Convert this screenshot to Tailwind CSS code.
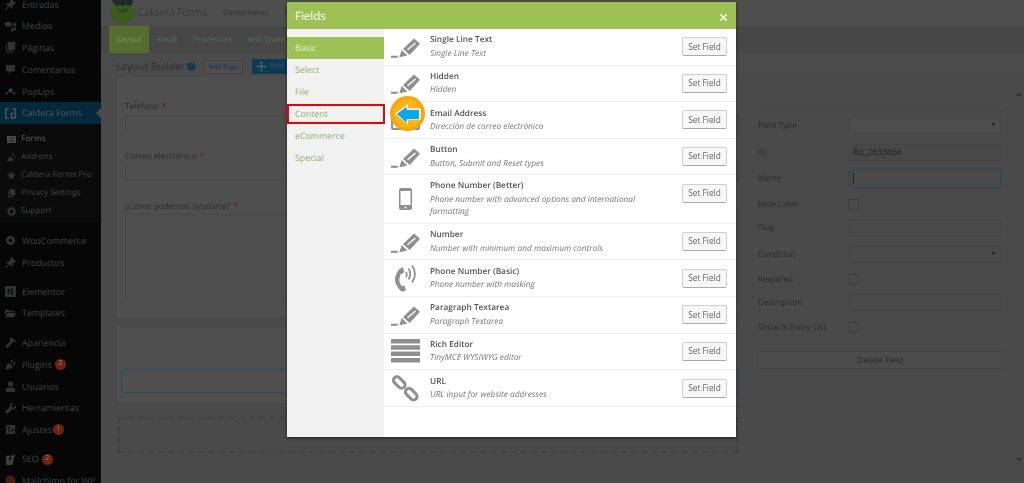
<!DOCTYPE html>
<html lang="es">
<head>
    <meta charset="UTF-8">
    <title>Caldera Forms - Fields</title>
    <script src="https://cdn.jsdelivr.net/npm/@tailwindcss/browser@4"></script>
</head>
<body class="bg-[#4a4a4a]">
    <svg class="hidden">
        <symbol id="pencil" viewBox="0 0 29 20">
            <rect x="0" y="17.700" width="6.700" height="2.100" fill="currentColor"/>
            <path d="M8.300 19.300l2.400-7.300 5.700 5.600z" fill="currentColor"/>
            <path d="M23 .5L29 5.800 18.700 17 12 11z" fill="currentColor"/>
            <path d="M16.500 11.800L24.500 5" stroke="#fff" stroke-width="1.400" fill="none"/>
        </symbol>
    </svg>

    <div class="relative w-[1024px] h-[483px] overflow-hidden flex font-['Open_Sans',sans-serif] [text-rendering:geometricPrecision] blur-[0.35px]">
        <!-- Sidebar -->
        <aside class="w-[101px] h-[483px] shrink-0 bg-[#060606] text-[8.900px] text-[#3f4345] overflow-hidden whitespace-nowrap">
            <div class="-mt-[6.500px]">
                <div class="h-[21.750px] flex items-center gap-[6px] pl-[5px]">
                    <svg class="w-[11px] h-[11px]" viewBox="0 0 12 12" fill="#303234"><path d="M7 0l5 5-1 1-1-.500-2 2 .5 2-1 1-2.500-2.500L1 12 0 11.500l3.500-3.500L1 5.500l1-1 2 .5 2-2L5.500 1z"/></svg>
                    <span>Entradas</span>
                </div>
                <div class="h-[21.750px] flex items-center gap-[6px] pl-[5px]">
                    <svg class="w-[11px] h-[11px]" viewBox="0 0 12 12" fill="#303234"><path d="M0 1h7v5H0zM8 3l4-1v7a1.500 1.500 0 1 1-1-1.400V4L9 4.500V10a1.500 1.500 0 1 1-1-1.400z"/></svg>
                    <span>Medios</span>
                </div>
                <div class="h-[21.750px] flex items-center gap-[6px] pl-[5px]">
                    <svg class="w-[11px] h-[11px]" viewBox="0 0 12 12" fill="#303234"><path d="M3 0h8v9H3zM1 2h1v8h7v1.500H1z"/></svg>
                    <span>Páginas</span>
                </div>
                <div class="h-[21.750px] flex items-center gap-[6px] pl-[5px]">
                    <svg class="w-[11px] h-[11px]" viewBox="0 0 12 12" fill="#303234"><path d="M1 1h10v7H7l-3 3V8H1z"/></svg>
                    <span>Comentarios</span>
                </div>
                <div class="h-[21.750px] flex items-center gap-[6px] pl-[5px]">
                    <svg class="w-[11px] h-[11px]" viewBox="0 0 12 12"><path d="M6 2l3 3-3 3-3-3z" fill="#23405a"/><circle cx="2" cy="8" r="1.500" fill="#303234"/><circle cx="10" cy="8" r="1.500" fill="#303234"/></svg>
                    <span>PopUps</span>
                </div>
                <div class="relative h-[21.750px] flex items-center gap-[6px] pl-[5px] bg-[#04283c] text-[#4f5b60]">
                    <svg class="w-[11px] h-[11px]" viewBox="0 0 12 12" fill="none" stroke="#4f5b60" stroke-width="1.500"><path d="M4 1H1v10h3M8 1h3v10H7V6h2"/></svg>
                    <span>Caldera Forms</span>
                    <div class="absolute right-0 top-[6px] w-0 h-0 border-y-[5px] border-y-transparent border-r-[5px] border-r-[#4a4a4a]"></div>
                </div>
                <div class="pt-[6.500px] pb-[1.500px] bg-[#0b0b0b] text-[8.200px]">
                    <div class="h-[18px] flex items-center gap-[5px] pl-[7px] font-semibold text-[#4a4c4e]">
                        <svg class="w-[9px] h-[9px]" viewBox="0 0 10 10" fill="#4a4c4e"><path d="M0 1h10v8H0zM2 3v1h1V3zm2 0v1h4V3zM2 6v1h1V6zm2 0v1h4V6z" fill-rule="evenodd"/></svg>
                        <span>Forms</span>
                    </div>
                    <div class="h-[18px] flex items-center gap-[5px] pl-[7px]">
                        <svg class="w-[9px] h-[9px]" viewBox="0 0 10 10" fill="#303234"><path d="M0 9l2-4 2-1 3 3-1 2zM5 3l2-3 1 1-2 3zM7 5l3-2v1L8 6z"/></svg>
                        <span>Add-ons</span>
                    </div>
                    <div class="h-[18px] flex items-center gap-[5px] pl-[7px]">
                        <svg class="w-[9px] h-[9px]" viewBox="0 0 10 10" fill="#303234"><path d="M5 0l1.500 3.300 3.500.400-2.600 2.300.8 3.500L5 7.700 1.800 9.500l.8-3.500L0 3.700l3.500-.4z"/></svg>
                        <span>Caldera Forms Pro</span>
                    </div>
                    <div class="h-[18px] flex items-center gap-[5px] pl-[7px]">
                        <svg class="w-[9px] h-[9px]" viewBox="0 0 10 10" fill="#303234"><path d="M3 0h6v7H3zM1 2h1v6h5v1.500H1z"/></svg>
                        <span>Privacy Settings</span>
                    </div>
                    <div class="h-[18px] flex items-center gap-[5px] pl-[7px]">
                        <svg class="w-[9px] h-[9px]" viewBox="0 0 10 10" fill="none" stroke="#303234" stroke-width="2.500"><circle cx="5" cy="5" r="3.500"/></svg>
                        <span>Support</span>
                    </div>
                </div>
                <div class="h-[8px]"></div>
                <div class="h-[21.750px] flex items-center gap-[6px] pl-[5px]">
                    <svg class="w-[11px] h-[11px]" viewBox="0 0 12 12" fill="none" stroke="#303234" stroke-width="3"><circle cx="6" cy="6" r="3.500"/></svg>
                    <span>WooCommerce</span>
                </div>
                <div class="h-[21.750px] flex items-center gap-[6px] pl-[5px]">
                    <svg class="w-[11px] h-[11px]" viewBox="0 0 12 12" fill="#303234"><path d="M7 0l5 5-1 1-1-.500-2 2 .5 2-1 1-2.500-2.500L1 12 0 11.500l3.500-3.500L1 5.500l1-1 2 .5 2-2L5.500 1z"/></svg>
                    <span>Productos</span>
                </div>
                <div class="h-[7px]"></div>
                <div class="h-[21.750px] flex items-center gap-[6px] pl-[5px]">
                    <svg class="w-[11px] h-[11px]" viewBox="0 0 12 12" fill="#303234"><path d="M0 0h12v12H0zM3 3v6h1.500V3zm3 0v1.300h3V3zm0 2.300v1.400h3V5.300zm0 2.400V9h3V7.700z" fill-rule="evenodd"/></svg>
                    <span>Elementor</span>
                </div>
                <div class="h-[21.750px] flex items-center gap-[6px] pl-[5px]">
                    <svg class="w-[11px] h-[11px]" viewBox="0 0 12 12" fill="#303234"><path d="M0 2h4l1 1h5v1.500H2L0 9zM2.500 5.500H12L10 10H0.500z"/></svg>
                    <span>Templates</span>
                </div>
                <div class="h-[8px]"></div>
                <div class="h-[21.750px] flex items-center gap-[6px] pl-[5px]">
                    <svg class="w-[11px] h-[11px]" viewBox="0 0 12 12" fill="#303234"><path d="M6 0l6 4-2 2-1-1-6 7-3-1 6-7-1-1z"/></svg>
                    <span>Apariencia</span>
                </div>
                <div class="h-[21.750px] flex items-center gap-[6px] pl-[5px]">
                    <svg class="w-[11px] h-[11px]" viewBox="0 0 12 12" fill="#303234"><path d="M0 12l2-6 3-1.500 3.500 3.500L7 10zM6 3l2.500-3 1 1L7 4.500zM8 5.500L11 3l1 1-2.500 3z"/></svg>
                    <span>Plugins</span>
                    <span class="w-[11px] h-[11px] -ml-[3px] rounded-full bg-[#6e2210] text-[#a08078] text-[7px] flex items-center justify-center">2</span>
                </div>
                <div class="h-[21.750px] flex items-center gap-[6px] pl-[5px]">
                    <svg class="w-[11px] h-[11px]" viewBox="0 0 12 12" fill="#303234"><circle cx="6" cy="3.200" r="2.800"/><path d="M1 12V9q0-2 3-2h4q3 0 3 2v3z"/></svg>
                    <span>Usuarios</span>
                </div>
                <div class="h-[21.750px] flex items-center gap-[6px] pl-[5px]">
                    <svg class="w-[11px] h-[11px]" viewBox="0 0 12 12" fill="#303234"><path d="M12 2.500L9.500 5 7.500 4.500 7 2.500 9.500 0q-3-.5-4 1.500-.5 1.500 0 2.500L0 9.500 2.500 12 8 6.500q1.500.5 2.500 0 2-1 1.500-4z"/></svg>
                    <span>Herramientas</span>
                </div>
                <div class="h-[21.750px] flex items-center gap-[6px] pl-[5px]">
                    <svg class="w-[11px] h-[11px]" viewBox="0 0 12 12" fill="#303234"><path d="M1 1h10v10H1zM3 3v1h1v5h1V4h1V3zm4 3v1h1v2h1V7h1V6z" fill-rule="evenodd"/></svg>
                    <span>Ajustes</span>
                    <span class="w-[11px] h-[11px] -ml-[5px] rounded-full bg-[#6e2210] text-[#a08078] text-[7px] flex items-center justify-center">1</span>
                </div>
                <div class="h-[7.500px]"></div>
                <div class="h-[21.750px] flex items-center gap-[6px] pl-[5px]">
                    <svg class="w-[11px] h-[11px]" viewBox="0 0 12 12" fill="#3c3e40"><path d="M1 2h7l3-2-3 12H3q-2 0-2-2zM4 4l1.500 4L7.500 3z" fill-rule="evenodd"/></svg>
                    <span>SEO</span>
                    <span class="w-[11px] h-[11px] -ml-[3px] rounded-full bg-[#6e2210] text-[#a08078] text-[7px] flex items-center justify-center">2</span>
                </div>
                <div class="h-[21.750px] flex items-center gap-[6px] pl-[5px]">
                    <svg class="w-[11px] h-[11px]" viewBox="0 0 12 12"><circle cx="6" cy="6" r="5.500" fill="#4a1d14"/></svg>
                    <span>Mailchimp for WP</span>
                </div>
            </div>
        </aside>

        <!-- Page behind the modal -->
        <main class="flex-1 flex flex-col min-w-0 text-[#2b2b2b]">
            <header class="h-[26px] shrink-0 bg-[#4e4e4e] flex items-center pl-[9px] overflow-hidden">
                <svg class="w-[25px] h-[26px] shrink-0" viewBox="0 0 25 26">
                    <circle cx="12.500" cy="12" r="12" fill="#3d5a1d"/>
                    <path d="M2 0h21q-1 6-4 6-2 0-3-2-2 3-4 2-2-2-4 0-3 1-6-6z" fill="#1d2b2b"/>
                    <path d="M6 7q6 5 13 0-2 6-6 6-4 0-7-6z" fill="#294a20"/>
                </svg>
                <span class="ml-[3px] pt-[1px] text-[10.600px] font-light text-[#303030] whitespace-nowrap">Caldera Forms</span>
                <span class="ml-[16px] pt-[2px] text-[7.700px] text-[#303030]">Contactanos</span>
                <span class="ml-[16px] pt-[2px] text-[7.700px] text-[#303030]">F</span>
            </header>
            <nav class="h-[27px] shrink-0 bg-[#474747] flex items-stretch pl-[8px] text-[7.800px] text-[#5a7040]">
                <div class="w-[40px] bg-[#566e2d] text-[#7c8f5c] pt-[2px] flex items-center justify-center">Layout</div>
                <div class="ml-[8px] pt-[2px] flex items-center">Email</div>
                <div class="ml-[16px] pt-[2px] flex items-center">Processors</div>
                <div class="ml-[15px] pt-[2px] flex items-center">Anti-Spam</div>
            </nav>
            <div class="h-[24px] shrink-0 bg-[#4b4b4b] flex items-center pl-[15px] pt-[3px]">
                <span class="text-[10.200px] text-[#2f2f2f]">Layout Builder</span>
                <span class="ml-[2px] w-[9px] h-[9px] rounded-full bg-[#12384f] text-[#4a4a4a] text-[7px] font-bold flex items-center justify-center">?</span>
                <span class="ml-[8px] w-[39px] h-[14px] bg-[#4e4e4e] border border-[#454545] text-[#123c54] text-[6.500px] font-semibold flex items-center justify-center">Add Page</span>
                <span class="ml-[9px] w-[60px] h-[15px] bg-[#0d3a55] text-[#45525a] text-[7.500px] flex items-center gap-[3px] pl-[4px]">
                    <svg class="w-[11px] h-[11px]" viewBox="0 0 12 12" fill="#4b5b63"><path d="M6 0l2 2.500H6.700v2.800h2.800V4L12 6 9.500 8V6.700H6.700v2.800H8L6 12 4 9.500h1.300V6.700H2.500V8L0 6l2.500-2v1.300h2.800V2.500H4z"/></svg>
                    Add Field
                </span>
            </div>
            <div class="flex-1 flex min-h-0">
                <!-- Form columns -->
                <div class="w-[637px] shrink-0 pl-[16px] flex flex-col">
                    <section class="h-[241px] bg-[#4f4f4f] pl-[8px] pt-[23px] text-[8.300px] text-[#2c2c2c]">
                        <div class="h-[14px] flex items-center">Teléfono <span class="ml-[3px] text-[#5c2a22]">*</span></div>
                        <div class="mt-[1px] h-[16px] border border-[#484848]"></div>
                        <div class="mt-[19px] h-[14px] flex items-center">Correo electrónico <span class="ml-[3px] text-[#5c2a22]">*</span></div>
                        <div class="mt-[1px] h-[16px] border border-[#484848]"></div>
                        <div class="mt-[19px] h-[14px] flex items-center">¿Cómo podemos ayudarte? <span class="ml-[3px] text-[#5c2a22]">*</span></div>
                        <div class="h-[85px] border border-[#484848]"></div>
                    </section>
                    <section class="mt-[9px] h-[76px] bg-[#4f4f4f] pl-[4px] pt-[42px]">
                        <div class="h-[24px] rounded-[2px] border border-[#24505f]"></div>
                    </section>
                    <div class="mt-[14px] ml-[1px] h-[36px] border-2 border-dashed border-[#424242]"></div>
                </div>
                <!-- Field settings -->
                <div class="flex-1 relative pl-[20px] pr-[21px] text-[8.300px] text-[#2c2c2c]">
                    <div class="absolute right-[2px] top-[16px] w-0 h-0 border-x-[3px] border-x-transparent border-b-[3px] border-b-[#2f2f2f]"></div>
                    <div class="absolute right-[2px] top-[381px] w-0 h-0 border-x-[3px] border-x-transparent border-t-[3px] border-t-[#2f2f2f]"></div>
                    <div class="mt-[34px] border-t border-[#454545] h-[6px]"></div>
                    <div class="h-[27px] flex items-start">
                        <span class="w-[91px] h-[19px] flex items-center">Field Type</span>
                        <div class="w-[152px] h-[17px] border border-[#464646] bg-[#4d4d4d] flex items-center justify-end pr-[4px] text-[5px] text-[#111]">▼</div>
                    </div>
                    <div class="h-[25px] flex items-start">
                        <span class="w-[91px] h-[19px] flex items-center">ID</span>
                        <div class="w-[152px] h-[17px] border border-[#464646] bg-[#484848] flex items-center pl-[3px] pt-[1px] text-[8.700px] text-[#222]">fld_2633866</div>
                    </div>
                    <div class="h-[30px] flex items-start">
                        <span class="w-[91px] h-[21px] flex items-center">Name</span>
                        <div class="w-[152px] h-[19px] rounded-[1px] border border-[#1e4d60] flex items-center pl-[3px]"><span class="w-px h-[11px] bg-[#222]"></span></div>
                    </div>
                    <div class="h-[20px] flex items-start">
                        <span class="w-[90px] h-[12px] flex items-center">Hide Label</span>
                        <div class="w-[11px] h-[11px] border border-[#404040]"></div>
                    </div>
                    <div class="h-[27px] flex items-start">
                        <span class="w-[91px] h-[19px] flex items-center">Slug</span>
                        <div class="w-[152px] h-[17px] border border-[#464646]"></div>
                    </div>
                    <div class="h-[28px] flex items-start">
                        <span class="w-[91px] h-[19px] flex items-center">Condition</span>
                        <div class="w-[152px] h-[17px] border border-[#464646] flex items-center justify-end pr-[4px] text-[5px] text-[#111]">▼</div>
                    </div>
                    <div class="h-[20px] flex items-start">
                        <span class="w-[90px] h-[12px] flex items-center">Required</span>
                        <div class="w-[11px] h-[11px] border border-[#404040]"></div>
                    </div>
                    <div class="h-[28px] flex items-start">
                        <span class="w-[91px] h-[19px] flex items-center">Description</span>
                        <div class="w-[152px] h-[17px] border border-[#464646]"></div>
                    </div>
                    <div class="h-[29px] flex items-start">
                        <span class="w-[90px] h-[12px] flex items-center">Show in Entry List</span>
                        <div class="w-[11px] h-[11px] border border-[#404040]"></div>
                    </div>
                    <div class="w-[245px] h-[18px] border border-[#464646] bg-[#4c4c4c] pt-[2px] flex items-center justify-center text-[#2a2a2a]">Delete Field</div>
                </div>
            </div>
        </main>

        <!-- Overlay modal -->
        <div class="absolute left-[287px] top-[2px] w-[449px] h-[435px] bg-white shadow-[0_1px_3px_rgba(0,0,0,0.6)] flex flex-col">
            <div class="h-[27px] shrink-0 bg-[#9dc155] flex items-center justify-between pl-[8px] pr-[9px] text-white">
                <span class="text-[11.500px] mt-[2px]">Fields</span>
                <svg class="w-[7px] h-[7px] mt-[3px]" viewBox="0 0 8 8" stroke="#fff" stroke-width="1.800"><path d="M.5.500l7 7M7.500.500l-7 7"/></svg>
            </div>
            <div class="flex-1 flex min-h-0">
                <div class="w-[97px] shrink-0 bg-[#f1f1f1] pt-[8px] text-[8.800px] text-[#98b065]">
                    <div class="h-[22px] bg-[#9dc155] text-[#e6f0cf] pt-[2px] flex items-center pl-[8px]">Basic</div>
                    <div class="h-[22px] pt-[2px] flex items-center pl-[8px]">Select</div>
                    <div class="h-[22px] pt-[2px] flex items-center pl-[8px]">File</div>
                    <div class="h-[22px] pt-[2px] flex items-center pl-[8px]">Content</div>
                    <div class="h-[22px] pt-[2px] flex items-center pl-[8px]">eCommerce</div>
                    <div class="h-[22px] pt-[2px] flex items-center pl-[8px]">Special</div>
                </div>
                <div class="flex-1 text-[8.300px]">
                    <div class="h-[36.600px] border-b border-[#eeeeee] flex items-center">
                        <svg class="ml-[7px] mt-[2px] w-[29px] h-[20px] text-[#8f8f8f] shrink-0"><use href="#pencil"/></svg>
                        <div class="ml-[10px] pt-[1px] flex-1">
                            <div class="font-semibold text-[#555]">Single Line Text</div>
                            <div class="mt-[1px] italic text-[#777]">Single Line Text</div>
                        </div>
                        <button class="mr-[9px] w-[45px] h-[19px] rounded-[2px] border border-[#cfcfcf] border-b-[#aaa] bg-[#f7f7f7] text-[#666] text-[8.300px]">Set Field</button>
                    </div>
                    <div class="h-[36.600px] border-b border-[#eeeeee] flex items-center">
                        <svg class="ml-[7px] mt-[2px] w-[29px] h-[20px] text-[#8f8f8f] shrink-0"><use href="#pencil"/></svg>
                        <div class="ml-[10px] pt-[1px] flex-1">
                            <div class="font-semibold text-[#555]">Hidden</div>
                            <div class="mt-[1px] italic text-[#777]">Hidden</div>
                        </div>
                        <button class="mr-[9px] w-[45px] h-[19px] rounded-[2px] border border-[#cfcfcf] border-b-[#aaa] bg-[#f7f7f7] text-[#666] text-[8.300px]">Set Field</button>
                    </div>
                    <div class="h-[36.600px] border-b border-[#eeeeee] flex items-center">
                        <svg class="ml-[7px] w-[29px] h-[23px] shrink-0" viewBox="0 0 29 23" fill="none" stroke="#8f8f8f" stroke-width="2"><rect x="1" y="4" width="27" height="17" rx="1"/></svg>
                        <div class="ml-[10px] pt-[1px] flex-1">
                            <div class="font-semibold text-[#555]">Email Address</div>
                            <div class="mt-[1px] italic text-[#777]">Dirección de correo electrónico</div>
                        </div>
                        <button class="mr-[9px] w-[45px] h-[19px] rounded-[2px] border border-[#cfcfcf] border-b-[#aaa] bg-[#f7f7f7] text-[#666] text-[8.300px]">Set Field</button>
                    </div>
                    <div class="h-[36.600px] border-b border-[#eeeeee] flex items-center">
                        <svg class="ml-[7px] mt-[2px] w-[29px] h-[20px] text-[#8f8f8f] shrink-0"><use href="#pencil"/></svg>
                        <div class="ml-[10px] pt-[1px] flex-1">
                            <div class="font-semibold text-[#555]">Button</div>
                            <div class="mt-[1px] italic text-[#777]">Button, Submit and Reset types</div>
                        </div>
                        <button class="mr-[9px] w-[45px] h-[19px] rounded-[2px] border border-[#cfcfcf] border-b-[#aaa] bg-[#f7f7f7] text-[#666] text-[8.300px]">Set Field</button>
                    </div>
                    <div class="h-[48.500px] border-b border-[#eeeeee] flex items-center">
                        <svg class="ml-[15px] mr-[8px] w-[13px] h-[22px] shrink-0" viewBox="0 0 13 22"><path fill="#8f8f8f" d="M2 0h9q2 0 2 2v18q0 2-2 2H2q-2 0-2-2V2q0-2 2-2zM1.500 3v14h10V3z" fill-rule="evenodd"/><circle cx="6.500" cy="19.500" r="1" fill="#fff"/></svg>
                        <div class="ml-[10px] pt-[1px] flex-1">
                            <div class="font-semibold text-[#555]">Phone Number (Better)</div>
                            <div class="mt-[1px] italic text-[#777] leading-[12.500px]">Phone number with advanced options and international<br>formatting</div>
                        </div>
                        <button class="mr-[9px] self-start mt-[8.500px] w-[45px] h-[19px] rounded-[2px] border border-[#cfcfcf] border-b-[#aaa] bg-[#f7f7f7] text-[#666] text-[8.300px]">Set Field</button>
                    </div>
                    <div class="h-[36.600px] border-b border-[#eeeeee] flex items-center">
                        <svg class="ml-[7px] mt-[2px] w-[29px] h-[20px] text-[#8f8f8f] shrink-0"><use href="#pencil"/></svg>
                        <div class="ml-[10px] pt-[1px] flex-1">
                            <div class="font-semibold text-[#555]">Number</div>
                            <div class="mt-[1px] italic text-[#777]">Number with minimum and maximum controls</div>
                        </div>
                        <button class="mr-[9px] w-[45px] h-[19px] rounded-[2px] border border-[#cfcfcf] border-b-[#aaa] bg-[#f7f7f7] text-[#666] text-[8.300px]">Set Field</button>
                    </div>
                    <div class="h-[36.600px] border-b border-[#eeeeee] flex items-center">
                        <svg class="ml-[10px] mr-[1px] w-[25px] h-[29px] shrink-0" viewBox="0 0 25 29" fill="none" stroke="#8f8f8f"><path d="M7 6.500Q-1.500 16 8.500 26" stroke-width="4"/><path d="M4.500 6l4-3 2 5-3 2zM6 24l4-3 2 5-3 2z" fill="#8f8f8f" stroke="none"/><path d="M12 8q1.500 2.500 0 5M14.500 4.500q3.500 5 0 11M18 1.500q6 8 0 17" stroke-width="1.800"/></svg>
                        <div class="ml-[10px] pt-[1px] flex-1">
                            <div class="font-semibold text-[#555]">Phone Number (Basic)</div>
                            <div class="mt-[1px] italic text-[#777]">Phone number with masking</div>
                        </div>
                        <button class="mr-[9px] w-[45px] h-[19px] rounded-[2px] border border-[#cfcfcf] border-b-[#aaa] bg-[#f7f7f7] text-[#666] text-[8.300px]">Set Field</button>
                    </div>
                    <div class="h-[36.600px] border-b border-[#eeeeee] flex items-center">
                        <svg class="ml-[7px] mt-[2px] w-[29px] h-[20px] text-[#8f8f8f] shrink-0"><use href="#pencil"/></svg>
                        <div class="ml-[10px] pt-[1px] flex-1">
                            <div class="font-semibold text-[#555]">Paragraph Textarea</div>
                            <div class="mt-[1px] italic text-[#777]">Paragraph Textarea</div>
                        </div>
                        <button class="mr-[9px] w-[45px] h-[19px] rounded-[2px] border border-[#cfcfcf] border-b-[#aaa] bg-[#f7f7f7] text-[#666] text-[8.300px]">Set Field</button>
                    </div>
                    <div class="h-[36.600px] border-b border-[#eeeeee] flex items-center">
                        <svg class="ml-[7px] w-[29px] h-[24px] shrink-0" viewBox="0 0 29 24" fill="#8f8f8f"><rect y="0" width="29" height="4.500" rx=".5"/><rect y="6.300" width="29" height="4.500" rx=".5"/><rect y="12.600" width="29" height="4.500" rx=".5"/><rect y="19" width="29" height="4.500" rx=".5"/></svg>
                        <div class="ml-[10px] pt-[1px] flex-1">
                            <div class="font-semibold text-[#555]">Rich Editor</div>
                            <div class="mt-[1px] italic text-[#777]">TinyMCE WYSIWYG editor</div>
                        </div>
                        <button class="mr-[9px] w-[45px] h-[19px] rounded-[2px] border border-[#cfcfcf] border-b-[#aaa] bg-[#f7f7f7] text-[#666] text-[8.300px]">Set Field</button>
                    </div>
                    <div class="h-[36.600px] border-b border-[#eeeeee] flex items-center">
                        <svg class="ml-[8px] mr-[1px] w-[27px] h-[27px] shrink-0" viewBox="0 0 27 27" fill="none" stroke="#8f8f8f" stroke-width="3"><rect x=".5" y="4" width="13.500" height="7" rx="3.500" transform="rotate(45 7.250 7.500)"/><rect x="12.500" y="15.700" width="13.500" height="7" rx="3.500" transform="rotate(45 19.250 19.200)"/></svg>
                        <div class="ml-[10px] pt-[1px] flex-1">
                            <div class="font-semibold text-[#555]">URL</div>
                            <div class="mt-[1px] italic text-[#777]">URL input for website addresses</div>
                        </div>
                        <button class="mr-[9px] w-[45px] h-[19px] rounded-[2px] border border-[#cfcfcf] border-b-[#aaa] bg-[#f7f7f7] text-[#666] text-[8.300px]">Set Field</button>
                    </div>
                </div>
            </div>
            <!-- Red highlight on Content -->
            <div class="absolute left-0 top-[102px] w-[98px] h-[19.500px] border-2 border-[#f00000]"></div>
            <!-- Orange arrow marker -->
            <svg class="absolute left-[103px] top-[94px] w-[35px] h-[35px]" viewBox="0 0 35 35">
                <circle cx="17.500" cy="17.500" r="17.500" fill="#f9a60c"/>
                <circle cx="17.500" cy="17.500" r="14" fill="#fdb515"/>
                <path d="M5 18L18 8v4.500h12.500v11H18V28z" fill="#fff"/>
                <path d="M6.700 18L16.700 10.700v3.300H29v9H16.700v3.700z" fill="#00aaf5"/>
            </svg>
        </div>
    </div>
</body>
</html>
